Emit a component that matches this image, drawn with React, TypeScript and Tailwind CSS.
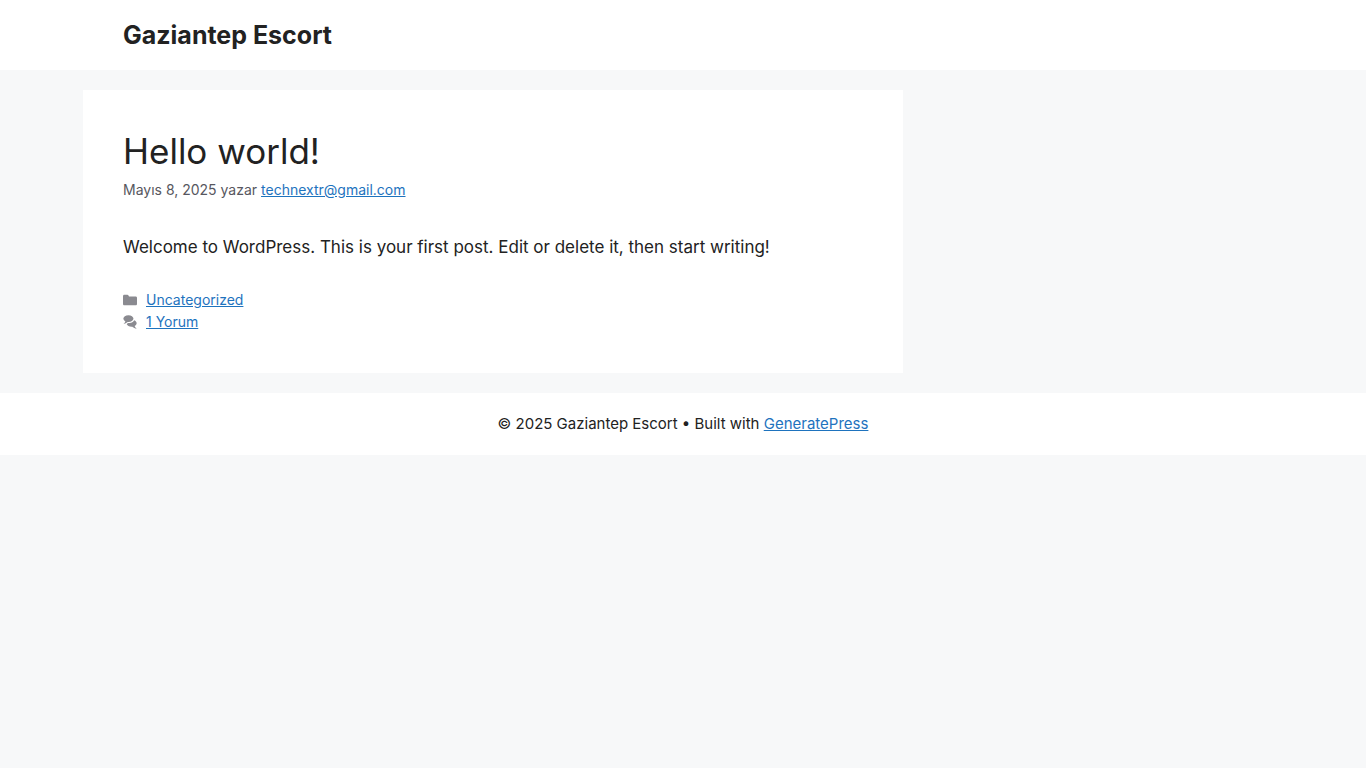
const link = "text-[#1e73be] underline hover:text-black";

function FolderIcon() {
  return (
    <svg viewBox="0 0 512 512" className="size-3.5 shrink-0" fill="currentColor" aria-hidden="true">
      <path fillRule="evenodd" d="M0 112c0-26.51 21.49-48 48-48h110.014a48 48 0 0 1 43.592 27.907l12.349 26.791A16 16 0 0 0 228.486 128H464c26.51 0 48 21.49 48 48v224c0 26.51-21.49 48-48 48H48c-26.51 0-48-21.49-48-48V112z" />
    </svg>
  );
}

function CommentsIcon() {
  return (
    <svg viewBox="0 0 512 512" className="size-3.5 shrink-0" fill="currentColor" aria-hidden="true">
      <path d="M132.838 329.973a435.298 435.298 0 0 0 16.769-9.004c13.363-7.574 26.587-16.142 37.419-25.507 7.544.597 15.27.925 23.098.925 54.905 0 105.634-15.311 143.285-41.28 23.728-16.365 43.115-37.692 54.155-62.645 54.739 22.205 91.498 63.272 91.498 110.286 0 42.186-29.558 79.498-75.09 102.828 23.46 49.216 75.09 101.709 75.09 101.709s-115.837-38.35-154.424-78.46c-9.956 1.12-20.297 1.758-30.793 1.758-88.727 0-162.927-43.071-181.007-100.61z" />
      <path d="M383.371 132.502c0 70.603-82.961 127.787-185.216 127.787-10.496 0-20.837-.639-30.793-1.757-38.587 40.093-154.424 78.429-154.424 78.429s51.63-52.472 75.09-101.67c-45.532-23.321-75.09-60.619-75.09-102.79C12.938 61.9 95.9 4.716 198.155 4.716 300.41 4.715 383.37 61.9 383.37 132.502z" />
    </svg>
  );
}

export default function App() {
  return (
    <div className="min-h-screen bg-[#f7f8f9] font-[Inter,sans-serif] text-[#222222]">
      <header className="bg-white">
        <div className="mx-auto max-w-[1200px] px-10 py-4">
          <p className="text-[25px] leading-[38px] font-bold">
            <a href="#home">Gaziantep Escort</a>
          </p>
        </div>
      </header>

      <main className="mx-auto max-w-[1200px] py-5">
        <article className="w-full bg-white p-10 lg:w-[820px]">
          <header>
            <h1 className="text-[35px] leading-[42px]">
              <a href="#post">Hello world!</a>
            </h1>
            <div className="mt-2 text-[14px] leading-5 text-[#575760]">
              <time dateTime="2025-05-08">Mayıs 8, 2025</time> yazar{" "}
              <a href="#author" className={link}>technextr@gmail.com</a>
            </div>
          </header>
          <p className="mt-[34px] text-[17px] leading-[26px]">
            Welcome to WordPress. This is your first post. Edit or delete it, then start writing!
          </p>
          <footer className="mt-[29px] text-[14px] leading-[22px] text-[#8a8a90]">
            <div className="flex items-center gap-[9px]">
              <FolderIcon />
              <a href="#category" className={link}>Uncategorized</a>
            </div>
            <div className="flex items-center gap-[9px]">
              <CommentsIcon />
              <a href="#comments" className={link}>1 Yorum</a>
            </div>
          </footer>
        </article>
      </main>

      <footer className="bg-white px-10 py-5 text-center text-[15px] leading-[22px]">
        © 2025 Gaziantep Escort • Built with{" "}
        <a href="#generatepress" className={link}>GeneratePress</a>
      </footer>
    </div>
  );
}
